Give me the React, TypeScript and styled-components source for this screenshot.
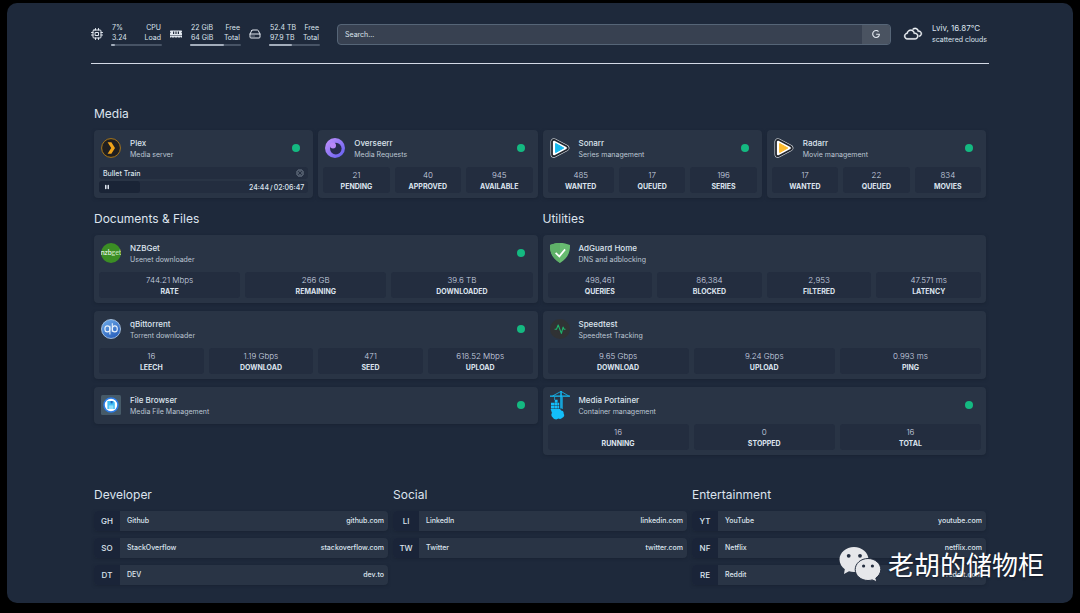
import React from "react";
import styled, { createGlobalStyle } from "styled-components";
import { FiCpu, FiHardDrive } from "react-icons/fi";
import { FaMemory } from "react-icons/fa";
import { BsCpu, BsPauseFill } from "react-icons/bs";
import { WiCloudy } from "react-icons/wi";
import { SiGoogle } from "react-icons/si";

const GlobalStyle = createGlobalStyle`
  *, *::before, *::after { box-sizing: border-box; }
  body {
    margin: 0;
    background: #000;
    color: #dde4ee;
    font-family: Inter, "Liberation Sans", "Noto Sans CJK SC", sans-serif;
    font-size: 8px;
    line-height: 11px;
  }
  h2, h3, p { margin: 0; font-weight: inherit; }
  a { color: inherit; text-decoration: none; }
`;

/* Page frame */

const Page = styled.div`
  position: relative;
  padding: 3px 7px 10px;
`;

const Panel = styled.div`
  padding: 19px 84px 18px;
  border-radius: 10px;
  background: #1e293b;
`;

/* Header */

const Header = styled.header`
  display: flex;
  align-items: center;
  padding-bottom: 17px;
  border-bottom: 1px solid #d3d9e6;
`;

const Resources = styled.div`
  display: flex;
  gap: 8px;
`;

const Resource = styled.div`
  display: flex;
  align-items: center;
  gap: 8px;

  > svg { width: 12px; height: 12px; color: #e2e8f0; }
`;

const Readings = styled.div`
  width: 51px;
  font-size: 7px;
  line-height: 10px;
`;

const Reading = styled.div`
  display: flex;
  justify-content: space-between;
  padding: 0 1px;
  white-space: nowrap;
`;

const Meter = styled.div`
  height: 2px;
  margin-top: 1px;
  border-radius: 1px;
  background: #475365;
`;

const MeterFill = styled.div`
  height: 2px;
  border-radius: 1px;
  background: #a3adbb;
`;

const SearchForm = styled.form`
  display: flex;
  flex: 1;
  height: 21px;
  margin: 0 10px 0 17px;
  border: 1px solid #566577;
  border-radius: 4px;
  background: #384151;
  overflow: hidden;
`;

const SearchInput = styled.input`
  flex: 1;
  min-width: 0;
  padding: 0 7px;
  border: 0;
  outline: 0;
  background: none;
  color: inherit;
  font: inherit;
  font-size: 7px;

  &::placeholder { color: #dde4ee; opacity: 1; }
`;

const SearchButton = styled.button`
  display: flex;
  align-items: center;
  justify-content: center;
  width: 28px;
  padding: 0;
  border: 0;
  background: #4a5361;
  color: #e2e8f0;

  svg { width: 8px; height: 8px; }
`;

const Weather = styled.div`
  display: flex;
  align-items: center;
  gap: 7px;
  white-space: nowrap;

  > svg {
    width: 24px;
    height: 24px;
    color: #f1f5f9;
    stroke: #f1f5f9;
    stroke-width: 0.4;
  }
`;

const WeatherText = styled.div`
  min-width: 57px;
  font-size: 7px;
`;

const Temperature = styled.div`
  font-size: 8px;
`;

/* Services */

const Main = styled.main`
  padding: 40px 3px 0;
`;

const Columns = styled.div<{ $count: number; $top: number }>`
  display: grid;
  grid-template-columns: repeat(${(p) => p.$count}, minmax(0, 1fr));
  gap: 5px;
  align-items: start;
  margin-top: ${(p) => p.$top}px;
`;

const Title = styled.h2`
  margin-bottom: 6px;
  font-size: 12px;
  line-height: 20px;
`;

const Stack = styled.div<{ $gap: number }>`
  display: flex;
  flex-direction: column;
  gap: ${(p) => p.$gap}px;
`;

const Card = styled.article`
  padding: 0 5px;
  border-radius: 4px;
  background: #293445;
  box-shadow: 0 1px 3px #1a2334;
`;

const CardHead = styled.div`
  display: flex;
  align-items: center;
  height: 37px;
  padding: 0 8px 1px 2px;

  > svg { flex: none; width: 20px; height: 30px; }
`;

const CardText = styled.a`
  flex: 1;
  min-width: 0;
  padding: 1px 0 0 9px;
`;

const Name = styled.h3`
  font-size: 8px;
  font-weight: 500;
`;

const Description = styled.p`
  color: #bcc6d3;
  font-size: 7px;
`;

const StatusDot = styled.span`
  width: 8px;
  height: 8px;
  border-radius: 50%;
  background: #14b981;
`;

const Stats = styled.div`
  display: flex;
  gap: 5px;
  padding-bottom: 5px;
`;

const Stat = styled.div`
  flex: 1;
  padding: 3px 0 1px;
  border-radius: 3px;
  background: #232d3f;
  text-align: center;
`;

const StatValue = styled.div`
  color: #cbd4e0;
  font-size: 8px;
  font-weight: 300;
`;

const StatLabel = styled.div`
  font-size: 7px;
  font-weight: 700;
  text-transform: uppercase;
`;

const Session = styled.div`
  display: flex;
  flex-direction: column;
  gap: 2px;
  padding-bottom: 5px;
`;

const SessionRow = styled.div`
  display: flex;
  align-items: center;
  justify-content: space-between;
  height: 12px;
  padding: 0 4px;
  border-radius: 3px;
  font-size: 7px;
  font-weight: 500;
  background: #232d3f;

  > svg { width: 8px; height: 8px; color: #7c8796; }
`;

const PlaybackRow = styled(SessionRow)`
  padding-left: 0;
`;

const Played = styled.span`
  display: flex;
  align-items: center;
  height: 12px;
  padding-left: 4px;
  border-radius: 3px;
  background: #1a2436;

  svg { width: 8px; height: 8px; }
`;

const Clock = styled.span`
  display: flex;
  gap: 1px;
`;

/* Bookmarks */

const Bookmark = styled.a`
  display: flex;
  height: 20px;
  border-radius: 4px;
  background: #293445;
  box-shadow: 0 1px 3px #1a2334;
  font-size: 7px;
  font-weight: 500;
  line-height: 20px;
  overflow: hidden;
`;

const Abbreviation = styled.span`
  width: 26px;
  background: #1a2438;
  font-size: 8px;
  text-align: center;
`;

const BookmarkName = styled.span`
  flex: 1;
  padding-left: 7px;
`;

const Host = styled.span`
  padding-right: 4px;
`;

const Watermark = styled.div`
  position: absolute;
  right: 36px;
  bottom: 31px;
  display: flex;
  align-items: center;
  gap: 7px;
  color: #fff;
  font-family: "Noto Sans CJK SC", sans-serif;
  font-size: 26px;
  line-height: 36px;
  text-shadow: 0 1px 2px #111827;

  svg { width: 42px; height: 36px; }
`;

/* Service logos */

const PlexLogo = () => (
  <svg viewBox="0 0 20 20" aria-hidden>
    <circle cx="10" cy="10" r="9.4" fill="#201f20" stroke="#c98a13" strokeWidth=".8" />
    <path d="M6.600 4.200h3.800l3.600 5.800-3.600 5.800H6.600l3.600-5.800z" fill="#efa31a" />
  </svg>
);

const OverseerrLogo = () => (
  <svg viewBox="0 0 20 20" aria-hidden>
    <defs>
      <linearGradient id="overseerr" x1="0" y1="0" x2="1" y2="1">
        <stop offset="0" stopColor="#c693fb" />
        <stop offset="1" stopColor="#5e5df0" />
      </linearGradient>
    </defs>
    <circle cx="10" cy="10" r="10" fill="url(#overseerr)" />
    <circle cx="10.800" cy="10.600" r="5.800" fill="#272c4e" />
    <circle cx="8" cy="7.400" r="3" fill="#b888f8" />
  </svg>
);

const ArrLogo = ({ color }: { color: string }) => (
  <svg viewBox="0 0 20 20" aria-hidden>
    <g strokeLinejoin="round">
      <path d="M4 3.8v12.4L15.8 10z" fill="#dfe3e8" stroke="#dfe3e8" strokeWidth="7" />
      <path d="M4 3.8v12.4L15.8 10z" fill="#22262e" stroke="#22262e" strokeWidth="5.8" />
      <path d="M4 3.8v12.4L15.8 10z" fill="#fff" stroke="#fff" strokeWidth="2.2" />
      <path d="M5.600 5.400v9.200l8.200-4.600z" fill={color} stroke={color} strokeWidth="1" />
    </g>
  </svg>
);

const NzbgetLogo = () => (
  <svg viewBox="0 0 20 20" aria-hidden>
    <circle cx="10" cy="10" r="10" fill="#3b8e24" />
    <text x="10" y="12" textAnchor="middle" fontFamily="Lato, sans-serif" fontSize="7" fill="#fff">
      nzb<tspan fill="#c9e6c0">get</tspan>
    </text>
  </svg>
);

const QbittorrentLogo = () => (
  <svg viewBox="0 0 20 20" aria-hidden>
    <defs>
      <linearGradient id="qbittorrent" x1="0" y1="0" x2=".6" y2="1">
        <stop offset="0" stopColor="#6fadeb" />
        <stop offset="1" stopColor="#2b62bd" />
      </linearGradient>
    </defs>
    <circle cx="10" cy="10" r="9.5" fill="url(#qbittorrent)" stroke="#b8d2ee" strokeWidth=".8" />
    <g fill="none" stroke="#e8f1fb" strokeWidth="1.1">
      <ellipse cx="6.400" cy="9.900" rx="2.500" ry="3" />
      <path d="M8.900 6.800v8.800M11.300 4.200v8.600" />
      <ellipse cx="13.800" cy="9.900" rx="2.500" ry="3" />
    </g>
  </svg>
);

const FileBrowserLogo = () => (
  <svg viewBox="0 0 20 20" aria-hidden>
    <rect width="20" height="20" rx="1.5" fill="#465a68" />
    <circle cx="10" cy="10" r="7" fill="#fff" stroke="#2c7be5" strokeWidth="1.6" />
    <path d="M6.400 6h6l1.400 1.400V14H6.400z" fill="#42bdf3" />
    <path d="M9.600 6h2v2.400h-2z" fill="#1f5fb8" />
    <path d="M7.800 10.400h4.600V14H7.800z" fill="#8fdcf8" />
  </svg>
);

const AdguardLogo = () => (
  <svg viewBox="0 0 20 20" aria-hidden>
    <path d="M10 0C6.8 0 3 .6 0 2.1c0 3.3-.4 11.700 10 17.900 10.400-6.200 10-14.600 10-17.900C17 .6 13.200 0 10 0z" fill="#68bc71" />
    <path d="M10 0C6.800 0 3 .6 0 2.100c0 3.300-.4 11.700 10 17.900z" fill="#5fb068" />
    <path d="M5.600 9.900l3.700 3.500 5.800-7" fill="none" stroke="#fff" strokeWidth="1.700" />
  </svg>
);

const SpeedtestLogo = () => (
  <svg viewBox="0 0 20 20" aria-hidden>
    <circle cx="10" cy="10" r="10" fill="#303234" />
    <path
      d="M4.600 10.300h1.900L8.200 6l3.200 8.400 1.700-6.300.9 2.200h1.500"
      fill="none"
      stroke="#1fb36b"
      strokeWidth="1.100"
      strokeLinejoin="round"
    />
  </svg>
);

const PortainerLogo = () => (
  <svg viewBox="0 0 20 30" aria-hidden fill="#13bef9">
    <path d="M10.300 1h1.500v17.500h-1.500zM0 5.600h20v1.200H0z" />
    <path d="M11 1.400L2.500 6M11 1.400L18.800 6" stroke="#13bef9" strokeWidth=".8" />
    <path d="M12.400 7v12M4.600 7v3" stroke="#13bef9" strokeWidth=".7" />
    <path d="M4.800 9.700h2.800v2.800H4.800zM1 12.800h3v2.800H1zM4.300 12.800h3.100v2.800H4.300zM7.700 12.800h1.500v2.800H7.700zM1 16h3v2.600H1zM4.300 16h3.100v2.600H4.300zM7.700 16h1.500v2.600H7.700z" />
    <path d="M.6 19h9.400l1.500 2.500L2 23z" />
    <path d="M3 27.700a3.300 3.300 0 0 1-.4-5.500 3.300 3.300 0 0 1 3.700-2 3.200 3.200 0 0 1 4.700.3 3 3 0 0 1 2.700 3.200 2.800 2.800 0 0 1-1.700 4.300c-1.100 1.400-2.700 1.200-3.500.6-1.500 1.300-4.500 1-5.500-.9z" />
  </svg>
);

const WechatLogo = () => (
  <svg viewBox="0 0 42 36" aria-hidden fill="#e6e7ea">
    <path d="M15 1C7 1 .5 6.600.5 13.600c0 3.900 2.100 7.300 5.300 9.600L5 28l5-2.800c1.600.4 3.300.7 5 .7 8 0 14.500-5.600 14.500-12.400S23 1 15 1z" />
    <path
      d="M29 12.500c-7 0-12.800 4.900-12.800 11S22 34.500 29 34.500c1.500 0 2.900-.2 4.200-.6l4.800 2-1.200-3.900c3-2 5-5.100 5-8.500 0-6.100-5.800-11-12.800-11z"
      stroke="#232d3f"
    />
    <g fill="#232d3f">
      <circle cx="9.700" cy="9.800" r="1.900" />
      <circle cx="21" cy="9.800" r="1.900" />
      <circle cx="24.600" cy="20" r="1.600" />
      <circle cx="33.400" cy="20" r="1.600" />
    </g>
  </svg>
);

/* Data */

interface ServiceInfo {
  name: string;
  description: string;
  logo: React.ReactNode;
  online?: boolean;
  stats?: [string, string][];
}

const resources = [
  { icon: <FiCpu />, rows: [["7%", "CPU"], ["3.24", "Load"]], used: 7 },
  { icon: <FaMemory />, rows: [["22 GiB", "Free"], ["64 GiB", "Total"]], used: 66 },
  { icon: <FiHardDrive />, rows: [["52.4 TB", "Free"], ["97.9 TB", "Total"]], used: 46 },
];

const media: ServiceInfo[] = [
  { name: "Overseerr", description: "Media Requests", logo: <OverseerrLogo />, online: true,
    stats: [["21", "Pending"], ["40", "Approved"], ["945", "Available"]] },
  { name: "Sonarr", description: "Series management", logo: <ArrLogo color="#16b9ee" />, online: true,
    stats: [["485", "Wanted"], ["17", "Queued"], ["196", "Series"]] },
  { name: "Radarr", description: "Movie management", logo: <ArrLogo color="#fdbb2d" />, online: true,
    stats: [["17", "Wanted"], ["22", "Queued"], ["834", "Movies"]] },
];

const documents: ServiceInfo[] = [
  { name: "NZBGet", description: "Usenet downloader", logo: <NzbgetLogo />, online: true,
    stats: [["744.21 Mbps", "Rate"], ["266 GB", "Remaining"], ["39.6 TB", "Downloaded"]] },
  { name: "qBittorrent", description: "Torrent downloader", logo: <QbittorrentLogo />, online: true,
    stats: [["16", "Leech"], ["1.19 Gbps", "Download"], ["471", "Seed"], ["618.52 Mbps", "Upload"]] },
  { name: "File Browser", description: "Media File Management", logo: <FileBrowserLogo />, online: true },
];

const utilities: ServiceInfo[] = [
  { name: "AdGuard Home", description: "DNS and adblocking", logo: <AdguardLogo />,
    stats: [["498,461", "Queries"], ["86,384", "Blocked"], ["2,953", "Filtered"], ["47.571 ms", "Latency"]] },
  { name: "Speedtest", description: "Speedtest Tracking", logo: <SpeedtestLogo />,
    stats: [["9.65 Gbps", "Download"], ["9.24 Gbps", "Upload"], ["0.993 ms", "Ping"]] },
  { name: "Media Portainer", description: "Container management", logo: <PortainerLogo />, online: true,
    stats: [["16", "Running"], ["0", "Stopped"], ["16", "Total"]] },
];

const bookmarks = [
  { title: "Developer", links: [["GH", "Github", "github.com"], ["SO", "StackOverflow", "stackoverflow.com"], ["DT", "DEV", "dev.to"]] },
  { title: "Social", links: [["LI", "LinkedIn", "linkedin.com"], ["TW", "Twitter", "twitter.com"]] },
  { title: "Entertainment", links: [["YT", "YouTube", "youtube.com"], ["NF", "Netflix", "netflix.com"], ["RE", "Reddit", "reddit.com"]] },
];

function Service({ service, children }: { service: ServiceInfo; children?: React.ReactNode }) {
  return (
    <Card>
      <CardHead>
        {service.logo}
        <CardText href="#">
          <Name>{service.name}</Name>
          <Description>{service.description}</Description>
        </CardText>
        {service.online && <StatusDot />}
      </CardHead>
      {service.stats && (
        <Stats>
          {service.stats.map(([value, label]) => (
            <Stat key={label}>
              <StatValue>{value}</StatValue>
              <StatLabel>{label}</StatLabel>
            </Stat>
          ))}
        </Stats>
      )}
      {children}
    </Card>
  );
}

function ServiceGroup({ title, services }: { title: string; services: ServiceInfo[] }) {
  return (
    <section>
      <Title>{title}</Title>
      <Stack $gap={8}>
        {services.map((s) => <Service key={s.name} service={s} />)}
      </Stack>
    </section>
  );
}

export default function App() {
  return (
    <Page>
      <GlobalStyle />
      <Panel>
        <Header>
          <Resources>
            {resources.map(({ icon, rows, used }) => (
              <Resource key={rows[0].join()}>
                {icon}
                <Readings>
                  {rows.map(([value, label]) => (
                    <Reading key={label}>
                      <span>{value}</span>
                      <span>{label}</span>
                    </Reading>
                  ))}
                  <Meter>
                    <MeterFill style={{ width: `${used}%` }} />
                  </Meter>
                </Readings>
              </Resource>
            ))}
          </Resources>
          <SearchForm>
            <SearchInput type="text" placeholder="Search..." aria-label="Search" />
            <SearchButton type="button" aria-label="Google">
              <SiGoogle />
            </SearchButton>
          </SearchForm>
          <Weather>
            <WiCloudy />
            <WeatherText>
              <Temperature>Lviv, 16.87°C</Temperature>
              <div>scattered clouds</div>
            </WeatherText>
          </Weather>
        </Header>

        <Main>
          <section>
            <Title>Media</Title>
            <Columns $count={4} $top={0}>
              <Service service={{ name: "Plex", description: "Media server", logo: <PlexLogo />, online: true }}>
                <Session>
                  <SessionRow>
                    <span>Bullet Train</span>
                    <BsCpu />
                  </SessionRow>
                  <PlaybackRow>
                    <Played style={{ width: "20%" }}>
                      <BsPauseFill />
                    </Played>
                    <Clock>
                      <span>24:44</span>
                      <span>/</span>
                      <span>02:06:47</span>
                    </Clock>
                  </PlaybackRow>
                </Session>
              </Service>
              {media.map((s) => <Service key={s.name} service={s} />)}
            </Columns>
          </section>

          <Columns $count={2} $top={11}>
            <ServiceGroup title="Documents & Files" services={documents} />
            <ServiceGroup title="Utilities" services={utilities} />
          </Columns>

          <Columns $count={3} $top={30}>
            {bookmarks.map(({ title, links }) => (
              <section key={title}>
                <Title>{title}</Title>
                <Stack $gap={7}>
                  {links.map(([abbr, name, host]) => (
                    <Bookmark key={name} href={`https://${host}`}>
                      <Abbreviation>{abbr}</Abbreviation>
                      <BookmarkName>{name}</BookmarkName>
                      <Host>{host}</Host>
                    </Bookmark>
                  ))}
                </Stack>
              </section>
            ))}
          </Columns>
        </Main>
      </Panel>
      <Watermark>
        <WechatLogo />
        <span>老胡的储物柜</span>
      </Watermark>
    </Page>
  );
}
